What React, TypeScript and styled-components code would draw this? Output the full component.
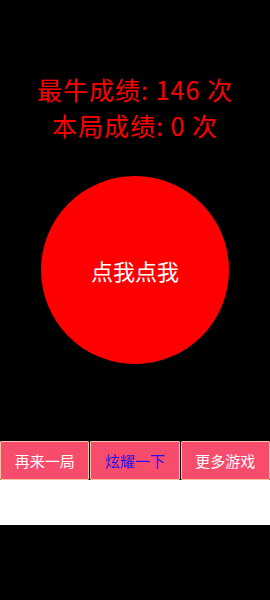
import styled, { createGlobalStyle } from 'styled-components';

const GlobalStyle = createGlobalStyle`
    html, body {
        margin: 0;
        padding: 0;
        background: #000000;
    }
    body {
        font-family: "Noto Sans CJK SC", "Noto Sans", sans-serif;
    }
`;

const Page = styled.div`
    width: 270px;
    min-height: 600px;
    background: #000000;
    display: flex;
    flex-direction: column;
    align-items: center;
    padding-top: 71px;
    box-sizing: border-box;
`;

const Score = styled.div`
    color: #ff0000;
    font-size: 25px;
    letter-spacing: 1px;
    line-height: 36px;
    text-align: center;
    white-space: nowrap;
`;

const TapButton = styled.button`
    margin-top: 33px;
    width: 188px;
    height: 188px;
    border-radius: 50%;
    border: none;
    background: #ff0000;
    color: #ffffff;
    font-family: "Noto Sans CJK SC", sans-serif;
    font-size: 22px;
    display: flex;
    align-items: center;
    justify-content: center;
    padding: 0;
    cursor: pointer;
`;

const ActionBar = styled.div`
    margin-top: 77px;
    width: 100%;
    display: flex;
    justify-content: space-between;
    gap: 1px;
`;

const ActionButton = styled.button<{ $highlight?: boolean }>`
    flex: 1;
    height: 39px;
    background: #f84c6c;
    border: 1px solid #f2c4a4;
    border-radius: 1px;
    color: ${(p) => (p.$highlight ? '#2a10e8' : '#ffffff')};
    font-family: "Noto Sans CJK SC", sans-serif;
    font-size: 15px;
    padding: 0;
    cursor: pointer;
`;

const WhiteStrip = styled.div`
    width: 100%;
    height: 45px;
    background: #ffffff;
`;

function App() {
    return (
        <>
            <GlobalStyle />
            <Page>
                <Score>最牛成绩: 146 次</Score>
                <Score>本局成绩: 0 次</Score>
                <TapButton>点我点我</TapButton>
                <ActionBar>
                    <ActionButton>再来一局</ActionButton>
                    <ActionButton $highlight>炫耀一下</ActionButton>
                    <ActionButton>更多游戏</ActionButton>
                </ActionBar>
                <WhiteStrip />
            </Page>
        </>
    );
}

export default App;
